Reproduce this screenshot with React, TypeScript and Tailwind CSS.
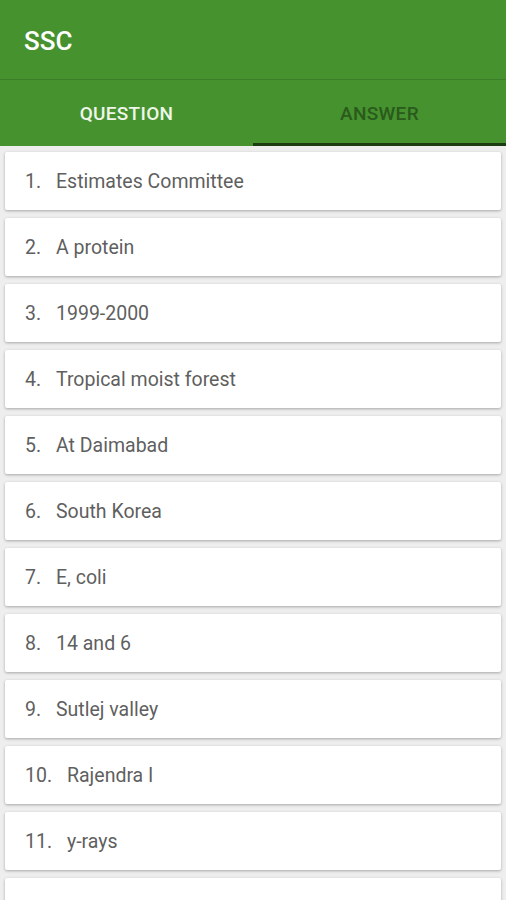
import React from "react";

const items = [
  "Estimates Committee",
  "A protein",
  "1999-2000",
  "Tropical moist forest",
  "At Daimabad",
  "South Korea",
  "E, coli",
  "14 and 6",
  "Sutlej valley",
  "Rajendra I",
  "y-rays",
  "",
];

export default function App() {
  return (
    <div
      className="w-[506px] h-[900px] overflow-hidden bg-[#eeeeee]"
      style={{ fontFamily: "Roboto, 'Noto Sans', sans-serif" }}
    >
      <div className="h-[80px] bg-[#46922e] flex items-center px-6 border-b border-[#3c7f28]">
        <span className="text-white text-[26px] font-medium pt-[3px]">SSC</span>
      </div>
      <div className="h-[66px] bg-[#46922e] flex relative">
        <div className="flex-1 flex items-center justify-center">
          <span className="text-[#eef6ea] text-[19px] font-medium tracking-[0.3px] pt-[2px]">QUESTION</span>
        </div>
        <div className="flex-1 flex items-center justify-center border-b-[3px] border-[#1c3d12]">
          <span className="text-[#2a5a1c] text-[19px] font-medium tracking-[0.3px] pt-[5px]">ANSWER</span>
        </div>
      </div>
      <div className="flex flex-col gap-[8px] px-[5px] pt-[6px]">
        {items.map((t, i) => (
          <div
            key={i}
            className="h-[58px] bg-white rounded-[2px] shadow-[0_1px_3px_rgba(0,0,0,0.3)] flex items-center pl-[20px] pt-[2px] text-[19.5px] text-[#5f5f5f] shrink-0"
          >
            {t && (
              <>
                <span className={i >= 9 ? "w-[42px]" : "w-[31px]"}>{i + 1}.</span>
                <span>{t}</span>
              </>
            )}
          </div>
        ))}
      </div>
    </div>
  );
}
